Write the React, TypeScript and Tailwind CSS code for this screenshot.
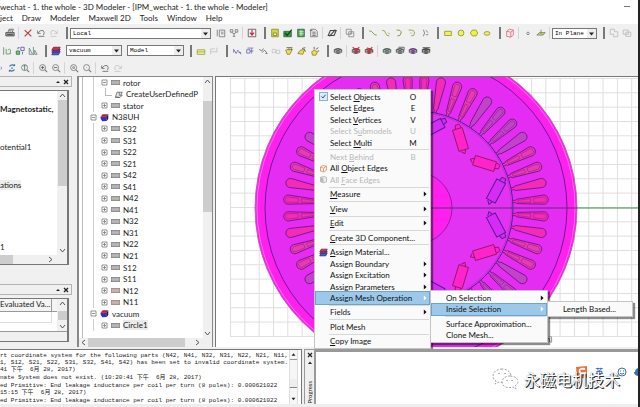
import type { ReactNode } from 'react';
import { clsx } from 'clsx';

const eye = (lid: string, iris: string) => (
  <>
    <path d="M1 5.5Q6 1 11 5.5" stroke={lid} strokeWidth="1.6" />
    <path d="M1 7Q6 3.5 11 7Q6 11 1 7Z" stroke={lid} fill="#fff" />
    <circle cx="6" cy="7" r="1.8" fill={iris} stroke={lid} />
  </>
);

const magnifier = (mark: ReactNode) => (
  <>
    <circle cx="5.5" cy="5.5" r="3.6" stroke="#777" />
    <path d="M8.2 8.2L11 11" stroke="#777" strokeWidth="1.3" />
    {mark}
  </>
);

const sheets = (
  <>
    <path d="M3 6.5h8l-2 4H1z" fill="#2a6fd0" stroke="#223a8a" />
    <path d="M3 4h8l-2 3.5H1z" fill="#7a3a9a" stroke="#4a2a7a" />
    <path d="M3 1.5h8L9 5H1z" fill="#d03050" stroke="#7a2040" />
  </>
);

const solidSheets = (
  <>
    <path d="M1 4.5L3.5 1.5H11L9 4.5z" fill="#c01c2c" />
    <path d="M1 4.5h8v6L3 11l-2-3z" fill="#2038c8" />
    <path d="M9 4.5l2-3v6l-2 3z" fill="#14146a" />
    <path d="M1 5l8 0v2H1z" fill="#8a1c50" />
  </>
);

const glyphs: Record<string, ReactNode> = {
  print: (
    <>
      <path d="M3.5 5L5 1.5h5L8.8 5" stroke="#555" fill="#fff" />
      <path d="M1 5.5h10v4H1z" fill="#aaa" stroke="#444" />
      <path d="M2.5 8h7M5 3.5h3" stroke="#333" />
    </>
  ),
  delete: <path d="M2 2.5L10 10M10 2L2 10" stroke="#b83c3c" strokeWidth="1.4" />,
  undo: <path d="M2 3v3.5h3.500M2.500 6Q5 2 8.500 3Q11 5 9 8.500M3 10h7" stroke="#666" />,
  redo: <path d="M10 3v3.500H6.500M9.500 6Q7 2 3.500 3Q1 5 3 8.500M2 10h7" stroke="#c4c4c4" />,
  pages: <path d="M1.500 2v8M4 2.500h6.500v8H4zM6 5h3M6 7h3" stroke="#777" />,
  branch: <path d="M1.500 2h3v3h-3zM7.500 2h3v3h-3zM6 10V7L3 5M6 7l3-2M4.500 10h3" stroke="#777" />,
  download: (
    <>
      <path d="M1.500 1.500h9v9h-9z" stroke="#555" />
      <path d="M6 2.500v5M3.500 5.500L6 8.500l2.500-3" stroke="#c03050" strokeWidth="1.400" />
    </>
  ),
  note: <><path d="M2 1.500h8v9H2z" fill="#cfd840" stroke="#8a9430" /><path d="M4 6h4v3H4z" fill="#f4f6c0" stroke="#7a8428" /></>,
  validate: <><path d="M1 4h9v6.500H1z" fill="#3c9a50" stroke="#246a34" /><path d="M2.500 6l2.500 3 5.500-7" stroke="#0e4a1c" strokeWidth="1.500" /></>,
  analyze: <><path d="M2 1.500h8v9H2z" fill="#5aa060" stroke="#2c6a38" /><path d="M6 2.500v7M4 4.500h5M4 7h5" stroke="#e4f4e4" /></>,
  report: <><path d="M2 1.500h5.500L10 4v6.500H2z" fill="#e8e8e8" stroke="#777" /><path d="M4 5h4M4 7h4M4 9h4M1 3h3" stroke="#666" /></>,
  plane: <path d="M4 3h7L8.500 9H1.500zM3 10l7-8" stroke="#444" strokeWidth="1.300" />,
  copy: <path d="M1.500 1.500h6v6h-6zM4.500 4.500h6v6h-6zM6 6.500h3" stroke="#888" />,
  line: <path d="M1.500 3.500Q4 3 6 6T10.500 8.500" stroke="#82a040" strokeWidth="1.200" />,
  spline: <path d="M1.500 3Q4.500 2 5.500 6T10 9.500M8.500 5.500l2 2" stroke="#82a040" />,
  arc: <path d="M3 2.500Q9 2 8.500 6T4 9.500" stroke="#82a040" strokeWidth="1.200" />,
  arcCenter: <path d="M2 2.500Q9 2 9 6T5 9.500M4 6h1.500" stroke="#82a040" />,
  equation: <path d="M4 2l1.500 4L4 10M7 2.500l2.500 3M7 8h3" stroke="#777" />,
  rect: <path d="M2 4h8v5H2z" fill="#f4f060" stroke="#8a9a28" />,
  circle: <circle cx="6" cy="6" r="3.500" fill="#f4f060" stroke="#8a9a28" />,
  polygon: <path d="M4 2.500h4.500L10.500 6 8.500 9.500H4L1.500 6z" fill="#f4f040" stroke="#8a9a28" />,
  ellipse: <ellipse cx="6" cy="6.500" rx="3.600" ry="2.200" fill="#f4f060" stroke="#8a9a28" />,
  region: <path d="M2 4l3-2.500 5 1v6l-3 2.500-5-1zM2 4l5 1 3-2.500M7 5v6" stroke="#e86478" />,
  point: <circle cx="6" cy="6.500" r="1.500" stroke="#777" />,
  axes: <path d="M1 8.500L4 5.500h7L8.500 8.500zM6 2v5" fill="#c8d070" stroke="#7a8a50" />,
  unite: <path d="M1.500 1.500h5v3h4v6h-5v-3h-4z" stroke="#bbb" />,
  subtract: <path d="M1.500 2.500h6v5h-6zM4.500 5h6v5h-6z" stroke="#bbb" />,
  snapEdge: <path d="M2 1.500v9M5 3.500v6M5 9.500h5M10 4v5.500M7 5l2-1.500" stroke="#5c8a5c" />,
  snapFace: <><path d="M1.500 6h4v4h-4z" fill="#7abf7a" stroke="#3c7a4c" /><path d="M7 1.500h4v4H7zM3.500 4V2h2M9 7v3" stroke="#55a" /></>,
  mirror: <path d="M1.500 10V2.500l4 7.500zM6.500 1v10M8 10V5l3 5z" stroke="#6a8a7a" />,
  sheets,
  solidSheets,
  box: <><path d="M1.500 4.500h9v5.500h-9z" fill="#f4f4a0" stroke="#9aa040" /><path d="M1.500 7h9" stroke="#9aa040" /></>,
  boxOff: <path d="M2 3.500h5M2 7h8M2 3.500v6.500M9.500 2v5" stroke="#c0c0c0" />,
  csRel: <path d="M2 4l3 5 2-4 4 5M2 4v4M8 8h3" stroke="#6a6ab0" />,
  csFace: <path d="M2 4.500h4v4H2zM6 6h4M8 3v6M3 2.500h7" stroke="#6a6ab0" />,
  csObj: <path d="M1.500 4l3 2 2-3M5 8l3-3 3 4M9 9h2" stroke="#667" />,
  csOff: <path d="M1.500 4h4v4h-4zM6.500 5h4v4h-4z" stroke="#c4c4c4" />,
  face1: <><path d="M2 5l3-1h5l-3 6H4z" fill="#e8e050" stroke="#8a8430" /><path d="M3 2h7M6 3v2M9 3v2" stroke="#555" /></>,
  face2: <><path d="M1 9l3-4 5-1-2 6z" fill="#e8e050" stroke="#8a8430" /><path d="M6 3l4-1M9 4l1 3" stroke="#555" /></>,
  face3: <><path d="M2 7l3-2 4 2-2 4H3z" fill="#e8e050" stroke="#8a8430" /><path d="M5 4V1M7 4l3-2M9 6h2" stroke="#555" /></>,
  eye: eye('#555', '#888'),
  eyeHide: <>{eye('#555', '#a44')}<path d="M2 1.500l8 6M10 1.500l-7 6" stroke="#c83250" strokeWidth="1.300" /></>,
  eyeHide2: <>{eye('#744', '#a44')}<path d="M4 2l7 5M10 1.500l-6 5" stroke="#c83250" strokeWidth="1.300" /></>,
  eyeShow: eye('#4a5a58', '#7a9a90'),
  eyeAll: <>{eye('#555', '#7a8a80')}<path d="M4 1.500h7v3" stroke="#555" /></>,
  eyeActive: eye('#5a3a70', '#a048b8'),
  eyeList: <><path d="M2 2h9M2 4h9" stroke="#444" />{eye('#444', '#777')}</>,
  rotate: <path d="M3 4Q6 1 9 3.500M9 3.500V1.500M9 8Q6 11 3 8.500M3 8.500v2M5 6h2" stroke="#3c74a8" strokeWidth="1.500" />,
  rotateHalf: <path d="M2 3Q6 5 2 10" stroke="#3c74a8" strokeWidth="1.500" />,
  zoomDyn: magnifier(<path d="M5.500 2.500v6M4 4l1.500-1.500L7 4" stroke="#4a7a68" />),
  zoomIn: magnifier(<path d="M3.500 5.500h4M5.500 3.500v4" stroke="#555" />),
  zoomOut: magnifier(<path d="M3.500 5.500h4" stroke="#555" />),
  zoomFit: magnifier(<path d="M4.500 4.500h2v2h-2z" stroke="#888" />),
  zoomSel: magnifier(<path d="M5 5.500h1" stroke="#999" />),
  part: <path d="M0 3.500h12v5H0z" fill="#b8b8b8" stroke="#666" />,
  partRed: <path d="M0 3.500h12v5H0z" fill="#ccb4b4" stroke="#866" />,
  command: <path d="M2 9l2-6h3v4h4l-3 3zM7 3h4L9 7M1.500 10h5" fill="#e8e8e8" stroke="#555" />,
  objEdges: <path d="M2 4l3-2 5 1v5l-3 2.500-5-1zM6 6v4M2 4l4 1.500 4-2.500" fill="#fbeee4" stroke="#d88858" />,
  faceEdges: <><path d="M2 3l4-1 4 1v6l-4 1.500L2 9z" fill="#eee" stroke="#aaa" /><path d="M2 3l4 1v6L2 9z" fill="#bbb" /></>,
  check: <path d="M2.500 6l2.500 2.500L9.500 3" stroke="#1c3c70" strokeWidth="1.600" />,
};

function Glyph({ name, className = 'size-3' }: { name: string; className?: string }) {
  return (
    <svg viewBox="0 0 12 12" fill="none" className={clsx('shrink-0', className)} aria-hidden="true">
      {glyphs[name]}
    </svg>
  );
}

function Tools({ names }: { names: string[] }) {
  return (
    <>
      {names.map((name, i) => {
        if (name === '|') return <span key={i} className="mx-[2px] h-3 w-px shrink-0 bg-[#d4d4d4]" />;
        if (name === '#') return <span key={i} className="ml-[6px] mr-[2px] h-3 w-[2px] shrink-0 bg-[#777]" />;
        return (
          <button key={i} type="button" aria-label={name} className="flex h-4 w-[13px] shrink-0 items-center justify-center">
            <Glyph name={name} className="size-[10px]" />
          </button>
        );
      })}
    </>
  );
}

function Combo({ label, value, className }: { label: string; value: string; className: string }) {
  return (
    <div className={clsx('relative shrink-0', className)}>
      <select
        aria-label={label}
        defaultValue={value}
        className="block h-[11px] w-full appearance-none border border-[#777] bg-white pl-[2px] font-['Liberation_Mono',monospace] text-[6px] leading-[9px] text-black"
      >
        <option>{value}</option>
      </select>
      <svg viewBox="0 0 9 9" className="pointer-events-none absolute right-px top-px size-[9px] bg-[#eee]" aria-hidden="true">
        <path d="M2 3.500h5L4.500 6.500z" fill="#222" />
      </svg>
    </div>
  );
}

function Arrow({ dir }: { dir: 'up' | 'down' | 'left' | 'right' }) {
  const paths = { up: 'M2 6l2.500-3L7 6', down: 'M2 3l2.500 3L7 3', left: 'M6 2L3 4.500 6 7', right: 'M3 2l3 2.500L3 7' };
  return (
    <svg viewBox="0 0 9 9" fill="none" className="size-[9px] shrink-0" aria-hidden="true">
      <path d={paths[dir]} stroke="#555" />
    </svg>
  );
}

function PanelTitle() {
  return (
    <div className="flex h-[11px] items-center justify-end gap-[2px] border-y border-r border-[#b4b4b4] pr-[2px] text-[#222]">
      <svg viewBox="0 0 6 6" className="size-[6px]" aria-hidden="true">
        <path d="M1 4h4L3 2z" fill="currentColor" />
      </svg>
      <svg viewBox="0 0 6 6" className="size-[6px]" aria-hidden="true">
        <path d="M1 1l4 4M5 1L1 5" stroke="currentColor" strokeWidth="1.300" />
      </svg>
    </div>
  );
}

function ProjectDock() {
  return (
    <div className="flex w-[72px] shrink-0 flex-col">
      <PanelTitle />
      <div className="mt-[3px] mr-[3px] flex h-[175px] flex-col border-t border-r-2 border-b border-[#777] bg-white">
        <div className="flex min-h-0 flex-1">
          <div className="min-w-0 flex-1 whitespace-nowrap">
            <div className="mt-3 font-bold leading-[12px]">Magnetostatic,</div>
            <div className="mt-[26px] leading-[12px]">otential1</div>
            <div className="mt-[26px] leading-[12px]">
              <span className="bg-[#eee]">ations</span>
            </div>
            <div className="mt-[50px] leading-[12px]">1</div>
          </div>
          <div className="flex w-[10px] flex-col items-center bg-[#f0f0f0]">
            <Arrow dir="up" />
            <div className="h-[86px] w-[9px] bg-[#cdcdcd]" />
            <div className="mt-auto flex">
              <Arrow dir="down" />
            </div>
          </div>
        </div>
        <div className="flex h-[9px] items-center bg-[#f0f0f0]">
          <div className="h-full w-[13px] bg-[#cdcdcd]" />
          <div className="ml-auto mr-3 flex">
            <Arrow dir="right" />
          </div>
        </div>
      </div>
      <div className="mt-[19px]">
        <PanelTitle />
      </div>
      <div className="mt-[3px] mr-[3px] flex h-[44px] flex-col border-t border-r-2 border-b border-[#777]">
        <div className="flex h-[33px] border-b border-[#999] bg-white">
          <table className="h-6 flex-1 table-fixed border-collapse">
            <thead>
              <tr>
                <th className="h-3 whitespace-nowrap border-r border-b border-[#999] bg-[#f4f4f4] p-0 text-left font-normal leading-[11px]">
                  Evaluated Va...
                </th>
                <th className="w-[6px] border-b border-[#999] bg-[#f4f4f4] p-0" />
              </tr>
            </thead>
            <tbody>
              <tr>
                <td className="border-r border-b border-[#ddd] p-0" />
                <td className="p-0" />
              </tr>
            </tbody>
          </table>
          <div className="flex w-[10px] flex-col items-center justify-between bg-[#f0f0f0]">
            <Arrow dir="up" />
            <div className="h-[9px] w-[9px] bg-[#cdcdcd]" />
            <Arrow dir="down" />
          </div>
        </div>
      </div>
    </div>
  );
}

interface TreeRow {
  label: string;
  level: 0 | 1 | 2;
  icon: string;
  open?: boolean;
  selected?: boolean;
}

const part = (label: string): TreeRow => ({ label, level: 1, icon: label === 'N12' || label === 'N11' ? 'partRed' : 'part' });

const tree: TreeRow[] = [
  { label: 'rotor', level: 1, icon: 'part', open: true },
  { label: 'CreateUserDefinedP', level: 2, icon: 'command' },
  { label: 'stator', level: 1, icon: 'part' },
  { label: 'N38UH', level: 0, icon: 'solidSheets', open: true },
  ...['S32', 'S31', 'S22', 'S21', 'S42', 'S41', 'N42', 'N41', 'N32', 'N31', 'N22', 'N21', 'S12', 'S11', 'N12', 'N11'].map(part),
  { label: 'vacuum', level: 0, icon: 'solidSheets', open: true },
  { label: 'Circle1', level: 1, icon: 'part', selected: true },
];

function Expander({ open }: { open?: boolean }) {
  return (
    <svg viewBox="0 0 7 7" className="size-[7px] shrink-0" fill="#fff" aria-hidden="true">
      <path d={open ? 'M1 1h5v5H1zM2 3.500h3' : 'M1 1h5v5H1zM2 3.500h3M3.500 2v3'} stroke="#777" strokeWidth="0.800" />
    </svg>
  );
}

function ModelTree() {
  return (
    <div className="ml-[5px] flex w-[136px] shrink-0 flex-col border-t border-l-2 border-r border-[#888] bg-white">
      <div className="flex min-h-0 flex-1">
        <ul className="ml-[3px] flex min-w-0 flex-1 flex-col border-l border-[#bbb] pb-[7px]">
          {tree.map((row) => (
            <li
              key={row.label}
              className={clsx(
                'flex min-h-0 flex-1 items-center whitespace-nowrap',
                row.level === 0 && 'pl-[7px]',
                row.level !== 0 && 'ml-[10px] border-l border-[#ccc] pl-[7px]',
              )}
            >
              {row.level === 2 ? (
                <span className="mr-[2px] mb-1 ml-1 h-2 w-[7px] shrink-0 border-b border-l border-[#bbb]" />
              ) : (
                <Expander open={row.open} />
              )}
              <Glyph name={row.icon} className={clsx('mr-[3px] size-[9px]', row.level !== 2 && 'ml-[3px]')} />
              <span className={clsx('leading-[10px]', row.selected && 'bg-[#eaeaea]')}>{row.label}</span>
            </li>
          ))}
        </ul>
        <div className="flex w-[9px] flex-col bg-[#f0f0f0]">
          <div className="flex h-6 items-start">
            <Arrow dir="up" />
          </div>
          <div className="h-[111px] bg-[#cdcdcd]" />
          <div className="mt-auto">
            <Arrow dir="down" />
          </div>
        </div>
      </div>
      <div className="flex h-[9px] items-center bg-[#f0f0f0]">
        <Arrow dir="left" />
        <div className="h-full w-[97px] bg-[#cdcdcd]" />
        <div className="ml-2 flex">
          <Arrow dir="right" />
        </div>
      </div>
    </div>
  );
}

const slotColors = ['#f22cb4', '#e83cb4', '#c044c8', '#c044c8', '#e83cb4', '#f22cb4'];

// Cross-section of the motor: 48 slots and 8 V-shaped magnet pairs
function MotorView() {
  return (
    <svg className="absolute inset-0 size-full" aria-label="Motor cross-section">
      <defs>
        <pattern id="grid" x="14" y="1" width="14.33" height="14.33" patternUnits="userSpaceOnUse">
          <path d="M0.500 0V14.330M0 0.500H14.330" stroke="#e0dce0" fill="none" />
        </pattern>
      </defs>
      <rect x="14" y="1" width="100%" height="259" fill="url(#grid)" />
      <g transform="translate(200 131)" fill="none">
        <circle r="161" fill="#ff20ee" stroke="#a060a8" strokeWidth="0.800" />
        <circle r="159" stroke="#f8a0f0" strokeWidth="0.600" />
        <circle r="151" fill="#e42cf2" stroke="#6a1c94" />
        {Array.from({ length: 48 }, (_, i) => (
          <g key={i} transform={`rotate(${3.75 + i * 7.5})`}>
            <path
              d="M97 -1.200H100L101 -2.200L128 -4.600A4.600 4.600 0 0 1 128 4.600L101 2.200L100 1.200H97"
              fill={slotColors[Math.floor(i / 2) % 6]}
              stroke="#6c1484"
              strokeWidth="0.800"
            />
            {i % 3 !== 1 && (
              <path d="M102 -1L115 -1.800V1.800L102 1ZM118 -2.200L128 -2.600A2.600 2.600 0 0 1 128 2.600L118 2.200Z" stroke="#8e1c84" strokeWidth="0.500" />
            )}
          </g>
        ))}
        <circle r="97" fill="#e232f2" stroke="#5a1c90" />
        <circle r="95.500" stroke="#9a28b4" strokeWidth="0.500" />
        {Array.from({ length: 8 }, (_, i) => {
          const pink = i % 2 === 1;
          return (
            <g key={i} transform={`rotate(${i * 45})`} fill={pink ? '#ff24c8' : '#d42cf4'} stroke={pink ? '#94186c' : '#52188e'} strokeWidth="0.900">
              {[1, -1].map((side) => (
                <g key={side} transform={`scale(1 ${side}) translate(80 17) rotate(62)`}>
                  <path d="M-11 -5H11V5H-11ZM11 -4L15 -3V1L11 2M-11 -2L-15 0L-12 3" />
                </g>
              ))}
            </g>
          );
        })}
        <circle r="36" fill="#ff20ee" stroke="#7a1c94" strokeWidth="0.800" />
        <path d="M0 0H161" stroke="#54307c" />
        <path d="M161 0H240" stroke="#3c8c4c" strokeWidth="1.200" />
      </g>
      <text x="321" y="265" fontSize="7" fill="#333">(mm)</text>
    </svg>
  );
}

interface MenuEntry {
  label: string;
  keyHint?: string;
  icon?: string;
  sub?: boolean;
  disabled?: boolean;
  active?: boolean;
}

const contextMenu: (MenuEntry | null)[] = [
  { label: 'Select &Objects', keyHint: 'O', icon: 'check' },
  { label: 'Select &Edges', keyHint: 'E' },
  { label: 'Select &Vertices', keyHint: 'V' },
  { label: 'Select S&ubmodels', keyHint: 'U', disabled: true },
  { label: 'Select &Multi', keyHint: 'M' },
  null,
  { label: 'Next &Behind', keyHint: 'B', disabled: true },
  { label: 'All &Object Edges', icon: 'objEdges' },
  { label: 'All &Face Edges', icon: 'faceEdges', disabled: true },
  null,
  { label: '&Measure', sub: true },
  null,
  { label: '&View', sub: true },
  null,
  { label: '&Edit', sub: true },
  null,
  { label: '&Create 3D Component...' },
  null,
  { label: '&Assign Material...', icon: 'sheets' },
  { label: 'Assign Boundary', sub: true },
  { label: 'Assign Excitation', sub: true },
  { label: 'Assign &Parameters', sub: true },
  { label: 'Assign Mesh Operation', sub: true, active: true },
  null,
  { label: 'Fields', sub: true },
  null,
  { label: 'Plot Mesh' },
  null,
  { label: '&Copy Image' },
];

const meshMenu: (MenuEntry | null)[] = [
  { label: 'On Selection', sub: true },
  { label: 'Inside Selection', sub: true, active: true },
  null,
  { label: 'Surface Approximation...' },
  { label: 'Clone Mesh...' },
];

function MenuLabel({ text }: { text: string }) {
  const at = text.indexOf('&');
  if (at < 0) return <>{text}</>;
  return (
    <>
      {text.slice(0, at)}
      <u>{text[at + 1]}</u>
      {text.slice(at + 2)}
    </>
  );
}

function Menu({ entries, className }: { entries: (MenuEntry | null)[]; className: string }) {
  return (
    <div
      role="menu"
      className={clsx('absolute flex flex-col border border-[#c4c4c4] bg-[#fafafa] p-px shadow-[2px_2px_1px_rgba(0,0,0,0.45)]', className)}
    >
      {entries.map((entry, i) =>
        entry === null ? (
          <div key={i} className="flex h-[3px] shrink-0 items-center pl-[13px]">
            <div className="h-px w-full bg-[#d8d8d8]" />
          </div>
        ) : (
          <button
            key={i}
            type="button"
            role="menuitem"
            disabled={entry.disabled}
            className={clsx(
              'flex min-h-0 flex-1 items-center whitespace-nowrap pr-[2px] text-left leading-[10px]',
              entry.active && 'bg-[#9cc8ea] outline outline-[#6ea4cc]',
              entry.disabled ? 'text-[#b8b8b8]' : 'text-[#111]',
            )}
          >
            <span className="flex w-[14px] shrink-0 justify-center">
              {entry.icon && (
                <Glyph
                  name={entry.icon}
                  className={clsx('size-[9px]', entry.icon === 'check' && 'border border-[#8ab0d4] bg-[#dcebf8]')}
                />
              )}
            </span>
            <span className="flex-1"><MenuLabel text={entry.label} /></span>
            {entry.keyHint && <span className="mr-2 w-3 text-center">{entry.keyHint}</span>}
            {entry.sub && (
              <svg viewBox="0 0 5 7" className="h-[6px] w-1" aria-hidden="true">
                <path d="M1 0.500L4.500 3.500L1 6.500z" fill={entry.active ? '#fff' : '#111'} />
              </svg>
            )}
          </button>
        ),
      )}
    </div>
  );
}

const messages = [
  [
    'rt coordinate system for the following parts (N42, N41, N32, N31, N22, N21, N11,',
    '1, S12, S21, S22, S31, S32, S41, S42) has been set to invalid coordinate system.',
    '41 下午  6月 28, 2017)',
  ],
  ['nate System does not exist. (10:20:41 下午  6月 28, 2017)'],
  ['ed Primitive: End leakage inductance per coil per turn (8 poles): 0.000621022', '15:15 下午  6月 28, 2017)'],
  ['ed Primitive: End leakage inductance per coil per turn (8 poles): 0.000621022'],
];

function MessageLog() {
  return (
    <div className="flex w-[302px] shrink-0 border-t border-r border-[#777] bg-white">
      <div className="flex min-w-0 flex-1 flex-col gap-px overflow-hidden pt-[2px] font-['Liberation_Mono','Noto_Sans_CJK_SC',monospace] text-[6px] leading-[7px] text-[#222]">
        {messages.map((lines, i) => (
          <div key={i}>
            {lines.map((line) => (
              <p key={line} className="h-[7px] whitespace-pre">{line}</p>
            ))}
          </div>
        ))}
      </div>
      <div className="mr-[3px] flex w-[9px] flex-col justify-between border-x border-[#ddd] bg-[#f6f6f6]">
        <svg viewBox="0 0 9 9" className="h-[10px] w-full border-b border-[#999]" aria-hidden="true">
          <path d="M2 6h5L4.500 3z" fill="#222" />
        </svg>
        <div className="mt-3 h-[9px] border-b border-[#888] bg-[#eee]" />
        <svg viewBox="0 0 9 9" className="h-[10px] w-full" aria-hidden="true">
          <path d="M2 3h5L4.500 6z" fill="#222" />
        </svg>
      </div>
    </div>
  );
}

function Watermark() {
  return (
    <div className="absolute right-0 bottom-4 flex items-center">
      <svg viewBox="0 0 28 24" className="mr-1 h-6 w-7" fill="#fff" stroke="#888" strokeWidth="0.800" strokeDasharray="2 1.500" aria-hidden="true">
        <path d="M10 2C5 2 1 5 1 9c0 2 1 4 3 5l-1 3 4-2c7 1 12-2 12-6S15 2 10 2z" />
        <path d="M18 9c-5 0-8 3-8 6 0 4 5 7 11 5l3 2-1-3c6-4 2-10-5-10z" />
        <path d="M7 6v1M13 6v1M15 13v1M20 13v1" stroke="#444" strokeDasharray="none" />
      </svg>
      <span className="relative z-10 mr-[18px] font-['Noto_Sans_CJK_SC',sans-serif] text-[16px] leading-6 text-white [text-shadow:1px_1px_0_#333,1px_1px_0_#555,0_0_1px_#777]">
        永磁电机技术
      </span>
      <div className="absolute -top-[3px] right-0 flex h-4 items-center gap-[6px] text-[#3470b8]">
        <svg viewBox="0 0 14 14" className="size-[14px]" aria-hidden="true">
          <path d="M1 2l11-1v12l-10 .5z" fill="#e8733c" />
          <path d="M10 4Q4 3 4.500 6T9 8T4 11" fill="none" stroke="#fff" strokeWidth="1.800" />
        </svg>
        <span className="font-['Noto_Sans_CJK_SC',sans-serif] text-[8px] font-bold leading-[8px]">英</span>
        <span className="text-[8px] leading-[8px]">,</span>
        <svg viewBox="0 0 10 10" className="size-[10px]" fill="none" stroke="currentColor" aria-hidden="true">
          <circle cx="5" cy="5" r="4" />
          <path d="M3.500 3.500v1M6.500 3.500v1M3 6.200Q5 8 7 6.200" />
        </svg>
        <svg viewBox="0 0 5 10" className="h-[10px] w-[5px]" fill="currentColor" aria-hidden="true">
          <path d="M5 1Q2 2 2 5H1q0 3 4 4z" />
        </svg>
      </div>
    </div>
  );
}

export default function App() {
  return (
    <div className="relative flex h-screen min-h-[400px] w-full flex-col overflow-hidden border-r-2 border-[#222] bg-[#f0f0f0] font-[Lato,'Noto_Sans_CJK_SC',sans-serif] text-[8px] text-[#222]">
      <header className="h-6 shrink-0 bg-white">
        <div className="flex h-[13px] items-center justify-between leading-[12px]">
          <h1>wechat - 1. the whole - 3D Modeler - [IPM_wechat - 1. the whole - Modeler]</h1>
          <span className="mr-2 h-px w-[6px] bg-[#777]" />
        </div>
        <nav className="flex items-center gap-[9px] leading-[11px]">
          {['ject', 'Draw', 'Modeler', 'Maxwell 2D', 'Tools', 'Window', 'Help'].map((item) => (
            <button key={item} type="button">{item}</button>
          ))}
        </nav>
      </header>

      {/* Toolbars */}
      <div className="flex h-[52px] shrink-0 flex-col">
        <div className="flex h-[18px] items-center pl-[3px]">
          <Tools names={['print', '|', 'delete', 'undo', 'redo', '#']} />
          <Combo label="Coordinate system" value="Local" className="mr-[3px] w-[141px]" />
          <Tools
            names={['pages', 'branch', '|', 'download', '#', 'note', 'validate', 'analyze', 'report', '|', 'plane', '|', 'copy', '#',
              'line', 'spline', 'arc', 'arcCenter', 'equation', '#', 'rect', 'circle', 'polygon', 'ellipse', '#', 'region', '|', 'point', 'axes', '|']}
          />
          <Combo label="Movement mode" value="In Plane" className="w-[45px]" />
          <Tools names={['#', 'unite', 'subtract']} />
        </div>
        <div className="flex h-[17px] items-center">
          <Tools names={['snapEdge', 'snapFace', 'mirror', '#', 'sheets']} />
          <Combo label="Material" value="vacuum" className="ml-1 w-14" />
          <Combo label="Object type" value="Model" className="ml-[5px] w-[57px]" />
          <Tools
            names={['#', 'box', 'boxOff', '#', 'csRel', 'csFace', 'csObj', 'csOff', 'face1', 'face2', 'face3', '#', 'eye', '|',
              'eyeHide', 'eyeHide2', '|', 'eyeShow', 'eyeAll', 'eyeActive', 'eyeList']}
          />
        </div>
        <div className="flex h-[17px] items-center">
          <Glyph name="rotateHalf" className="h-[10px] w-[5px]" />
          <Tools names={['rotate', 'zoomDyn', '|', 'zoomIn', 'zoomOut', '|', 'zoomFit', 'zoomSel', '|', 'undo', 'redo']} />
        </div>
      </div>

      <main className="flex min-h-0 flex-1">
        <ProjectDock />
        <ModelTree />
        <div className="relative ml-[2px] min-w-0 flex-1 border-t border-l border-[#777] bg-white">
          <MotorView />
          <Menu entries={contextMenu} className="left-[98px] top-[12px] h-[260px] w-[117px]" />
          <Menu entries={meshMenu} className="left-[214px] top-[213px] h-[53px] w-[118px]" />
          <Menu entries={[{ label: 'Length Based...' }]} className="left-[331px] top-[224px] h-4 w-[86px]" />
        </div>
      </main>

      <footer className="relative flex h-[60px] shrink-0 flex-col">
        <div className="flex min-h-0 flex-1 pt-[2px]">
          <MessageLog />
          <div className="ml-[2px] flex w-[11px] shrink-0 flex-col items-center border-x border-t border-[#999]">
            <svg viewBox="0 0 6 14" className="mt-[2px] h-[14px] w-[6px]" aria-hidden="true">
              <path d="M1 1l4 4M5 1L1 5" stroke="#222" strokeWidth="1.200" />
              <path d="M1 12h4L3 9.500z" fill="#222" />
            </svg>
            <span className="mt-auto rotate-180 text-[6px] leading-[9px] [writing-mode:vertical-rl]">Progress</span>
          </div>
          <div className="flex-1 border-t-[3px] border-l border-[#999] bg-white" />
        </div>
        <div className="h-[3px] shrink-0 bg-[#eee]" />
        <Watermark />
      </footer>
    </div>
  );
}
